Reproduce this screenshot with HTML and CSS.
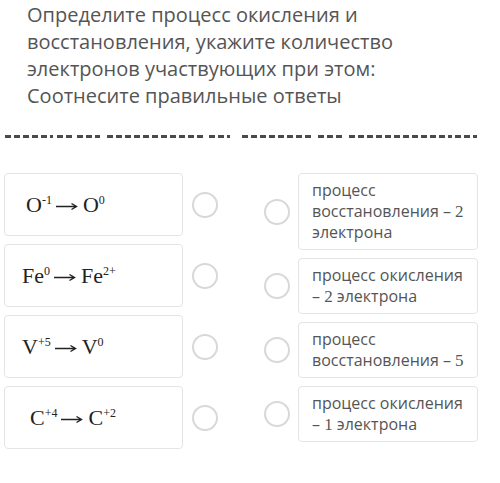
FILE: index.html
```html
<!DOCTYPE html>
<html lang="ru">
<head>
    <meta charset="UTF-8">
    <meta name="viewport" content="width=device-width, initial-scale=1.0">
    <title>Соотнесите правильные ответы</title>
    <link rel="stylesheet" href="styles.css">
</head>
<body>
    <div class="question">
        Определите процесс окисления и восстановления, укажите количество электронов участвующих при этом:
        Соотнесите правильные ответы
    </div>

    <!-- обрезанная строка текста -->
    <div class="cut-line">
        <span style="margin-left:0;width:48px"></span>
        <span style="margin-left:4px;width:15px"></span>
        <span style="margin-left:5px;width:23px"></span>
        <span style="margin-left:7px;width:96px"></span>
        <span style="margin-left:6px;width:21px"></span>
        <span style="margin-left:12px;width:70px"></span>
        <span style="margin-left:6px;width:25px"></span>
        <span style="margin-left:6px;width:103px"></span>
        <span style="margin-left:3px;width:22px"></span>
    </div>

    <div class="match">
        <div class="column">
            <div class="left-row">
                <div class="formula pad-a"><span>O<sup>-1</sup><svg class="arrow" viewBox="0 0 22 10"><path d="M0 5.5H20M15.5 2.5L20.5 5.5L15.5 8.5"/></svg>O<sup>0</sup></span></div>
                <span class="radio"></span>
            </div>
            <div class="left-row">
                <div class="formula"><span>Fe<sup>0</sup><svg class="arrow" viewBox="0 0 22 10"><path d="M0 5.5H20M15.5 2.5L20.5 5.5L15.5 8.5"/></svg>Fe<sup>2+</sup></span></div>
                <span class="radio"></span>
            </div>
            <div class="left-row">
                <div class="formula"><span>V<sup>+5</sup><svg class="arrow" viewBox="0 0 22 10"><path d="M0 5.5H20M15.5 2.5L20.5 5.5L15.5 8.5"/></svg>V<sup>0</sup></span></div>
                <span class="radio"></span>
            </div>
            <div class="left-row">
                <div class="formula pad-b"><span>C<sup>+4</sup><svg class="arrow" viewBox="0 0 22 10"><path d="M0 5.5H20M15.5 2.5L20.5 5.5L15.5 8.5"/></svg>C<sup>+2</sup></span></div>
                <span class="radio"></span>
            </div>
        </div>

        <div class="column">
            <div class="right-row">
                <span class="radio"></span>
                <div class="answer">процесс восстановления – <span class="num">2</span> электрона</div>
            </div>
            <div class="right-row">
                <span class="radio"></span>
                <div class="answer">процесс окисления <span class="nowrap">– <span class="num">2</span> электрона</span></div>
            </div>
            <div class="right-row">
                <span class="radio"></span>
                <div class="answer">процесс восстановления – <span class="num">5</span></div>
            </div>
            <div class="right-row">
                <span class="radio"></span>
                <div class="answer">процесс окисления <span class="nowrap">– <span class="num">1</span> электрона</span></div>
            </div>
        </div>
    </div>
</body>
</html>
```

FILE: styles.css
```css
body {
    margin: 0;
    background: #fff;
    font-family: "Open Sans", "Noto Sans", sans-serif;
    color: #555;
}
.question {
    padding: 1px 60px 0 27px;
    font-size: 20px;
    line-height: 27px;
}
.cut-line {
    display: flex;
    margin: 26px 0 0 5px;
    height: 3px;
}
.cut-line span {
    height: 3px;
    background: repeating-linear-gradient(90deg, #4a4a4a 0 6px, transparent 6px 9px);
}
.match {
    display: flex;
    gap: 46px;
    margin: 35px 0 0 4px;
}
.column {
    display: flex;
    flex-direction: column;
    gap: 8px;
}
.left-row {
    display: flex;
    align-items: center;
    gap: 9px;
}
.right-row {
    display: flex;
    align-items: center;
    gap: 8px;
}
.formula {
    box-sizing: border-box;
    width: 179px;
    height: 63px;
    padding-left: 17px;
    display: flex;
    align-items: center;
    border: 1px solid #e4e4e4;
    border-radius: 4px;
    font-family: "Liberation Serif", "Times New Roman", serif;
    font-size: 22px;
    color: #222;
}
.formula.pad-a {
    padding-left: 21px;
}
.formula.pad-b {
    padding-left: 25px;
}
.formula sup {
    font-size: 12px;
    line-height: 0;
    vertical-align: 8px;
}
.arrow {
    width: 22px;
    height: 10px;
    margin: 0 5px 0 4px;
    vertical-align: 1px;
    fill: none;
    stroke: #222;
    stroke-width: 1.4;
}
.radio {
    box-sizing: border-box;
    width: 26px;
    height: 26px;
    border: 2px solid #d8d8d8;
    border-radius: 50%;
    flex-shrink: 0;
}
.answer {
    box-sizing: border-box;
    width: 180px;
    padding: 6px 6px 6px 13px;
    border: 1px solid #e4e4e4;
    border-radius: 4px;
    font-size: 16px;
    line-height: 21px;
}
.nowrap {
    white-space: nowrap;
}
.num {
    font-family: "Liberation Serif", "Times New Roman", serif;
    font-size: 17px;
}
```
